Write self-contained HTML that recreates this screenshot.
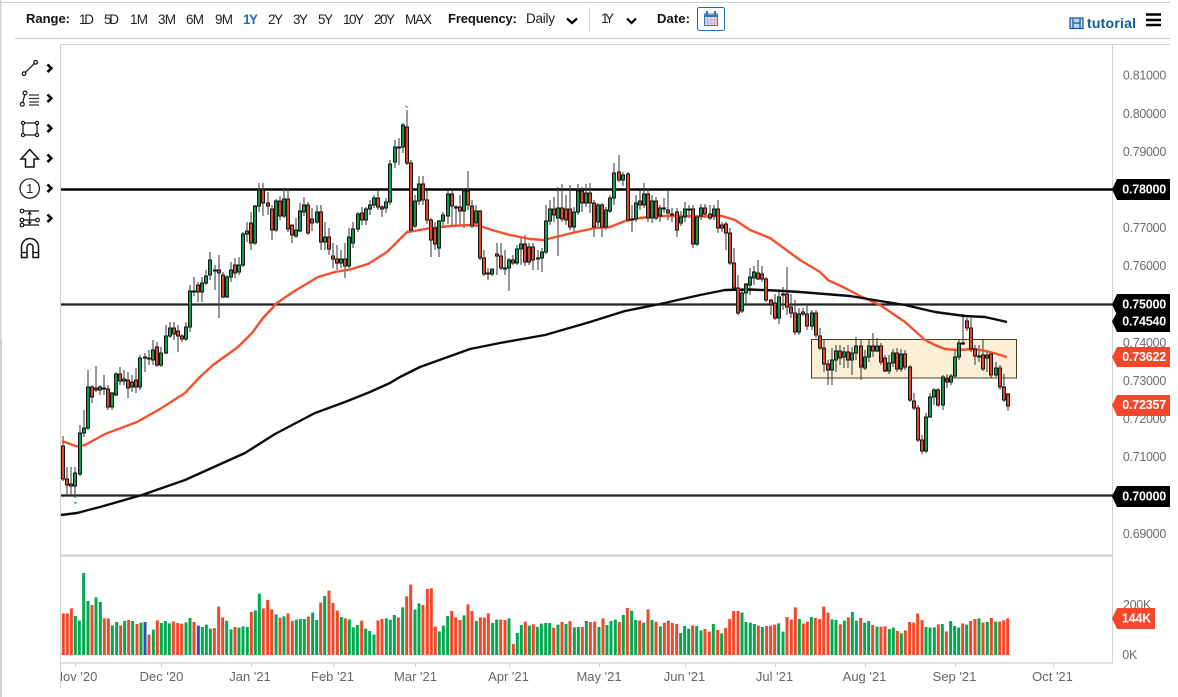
<!DOCTYPE html>
<html><head><meta charset="utf-8"><style>
html,body{margin:0;padding:0;background:#fff;width:1178px;height:697px;overflow:hidden}
svg{display:block;font-family:"Liberation Sans",Arial,sans-serif}
.t{font-size:13.5px;fill:#222}
.b{font-size:13px;font-weight:bold;fill:#111}
.y{font-size:12.5px;letter-spacing:-.3px;fill:#6c6c6c;text-anchor:end}
.l{font-size:13px;fill:#666;text-anchor:middle}
.w{font-size:12.5px;letter-spacing:-.2px;font-weight:bold;fill:#fff;text-anchor:end}
.ic{fill:none;stroke:#111;stroke-width:1.2}
.ch{fill:none;stroke:#000;stroke-width:2.2}
</style></head><body>
<svg width="1178" height="697" viewBox="0 0 1178 697" xmlns="http://www.w3.org/2000/svg">
<defs><clipPath id="c"><rect x="61" y="660" width="1052" height="30"/></clipPath></defs>
<rect x="0" y="0" width="1.5" height="340" fill="#d4d4d4"/>
<rect x="0" y="340" width="2" height="357" fill="#cfcfcf"/>
<rect x="0" y="2" width="1170" height="1" fill="#cfcfcf"/>
<rect x="15" y="38" width="1155" height="1" fill="#cfcfcf"/>
<rect x="60" y="44" width="1110" height="1" fill="#d2d2d2"/>
<rect x="60" y="44" width="1" height="644" fill="#cfcfcf"/>
<rect x="1112" y="44" width="1" height="619" fill="#d2d2d2"/>
<rect x="61" y="554.5" width="1051" height="2" fill="#cdcdcd"/>
<rect x="61" y="662" width="1052" height="2" fill="#e2e2e2"/>

<!-- toolbar -->
<text class="b" x="26" y="23" textLength="44">Range:</text>
<text class="t" x="79" y="24" textLength="15">1D</text>
<text class="t" x="104" y="24" textLength="15">5D</text>
<text class="t" x="130" y="24" textLength="18">1M</text>
<text class="t" x="158" y="24" textLength="18">3M</text>
<text class="t" x="186" y="24" textLength="18">6M</text>
<text class="t" x="215" y="24" textLength="18">9M</text>
<text class="b" x="243" y="24" textLength="15" style="fill:#2a6db5;font-size:13.5px">1Y</text>
<text class="t" x="268" y="24" textLength="15">2Y</text>
<text class="t" x="293" y="24" textLength="15">3Y</text>
<text class="t" x="318" y="24" textLength="15">5Y</text>
<text class="t" x="343" y="24" textLength="21">10Y</text>
<text class="t" x="374" y="24" textLength="21">20Y</text>
<text class="t" x="405" y="24" textLength="27">MAX</text>
<text class="b" x="448" y="23" textLength="69">Frequency:</text>
<text class="t" x="526" y="23" textLength="29">Daily</text>
<path class="ch" d="M567 18.500l5 4.500 5-4.500"/>
<rect x="589" y="7" width="1" height="25" fill="#d0d0d0"/>
<text class="t" x="601" y="23" textLength="13">1Y</text>
<path class="ch" d="M627 18.500l4.500 4.500 4.500-4.500"/>
<text class="b" x="657" y="23" textLength="33">Date:</text>
<rect x="697.500" y="7.500" width="27" height="23" rx="2" fill="#fff" stroke="#1a6bb0"/>
<rect x="704.500" y="14" width="13" height="11.500" fill="#cfe0f2" stroke="#2f77b8"/>
<path d="M704.500 15h13v2h-13z" fill="#2f77b8"/>
<path d="M707.500 17v8M711 17v8M714.500 17v8M705 20h12M705 23h12" stroke="#d88" stroke-width=".6"/>
<path d="M707 11v4M715 11v4" stroke="#2f77b8" stroke-width="2"/>

<rect x="1070" y="18" width="13" height="10.500" fill="#bcd6ee" stroke="#0b5a9c" stroke-width="1.200"/>
<path d="M1073 18v10.500M1080 18v10.500M1073 23h7" stroke="#0b5a9c" stroke-width="1.200"/>
<text x="1087" y="28" font-size="14" font-weight="bold" fill="#0b5a9c" textLength="49">tutorial</text>
<path d="M1146 14.500h15M1146 20h15M1146 25h15" stroke="#000" stroke-width="2.500"/>

<!-- left tools -->
<g class="ic">
<circle cx="24" cy="73.700" r="1.800"/><circle cx="35.700" cy="62.300" r="1.800"/><path d="M25.300 72.400L34.400 63.600"/>
<circle cx="22.300" cy="104.300" r="1.900"/><circle cx="25" cy="93" r="1.900"/><path d="M22.800 102.500L24.600 95"/>
<path d="M29 95h10M29 98.500h10M29 102h10M29 105h10" stroke="#333"/>
<rect x="23" y="123" width="14" height="12"/>
<g fill="#fff"><circle cx="23" cy="123" r="1.600" fill="#fff"/><circle cx="37" cy="123" r="1.600" fill="#fff"/><circle cx="23" cy="135" r="1.600" fill="#fff"/><circle cx="37" cy="135" r="1.600" fill="#fff"/></g>
<path stroke-width="1.500" d="M29.700 149.500L21 159H25.500V167H34V159H38.500Z"/>
<circle cx="29.700" cy="188.500" r="9.700"/>
<path d="M22 211h17M22 220h17M22 225h17"/>
<path d="M29.700 212v12M28 214.500l1.700-2.500 1.700 2.500M28 221.500l1.700 2.500 1.700-2.500" stroke-width="1"/>
<circle cx="22" cy="211" r="1.800" fill="#fff"/><circle cx="22" cy="220" r="1.800" fill="#fff"/><circle cx="22" cy="225" r="1.800" fill="#fff"/><circle cx="37.500" cy="220" r="1.800" fill="#fff"/>
<path stroke-width="1.500" d="M21.500 257.500V247a8.500 8.500 0 0 1 17 0V257.500H33V247a3 3 0 0 0-6 0V257.500Z"/>
<path stroke-width="1.300" d="M21.500 252.500H27M33 252.500H38.500"/>
</g>
<text x="29.700" y="193" font-size="13" fill="#222" text-anchor="middle">1</text>
<path class="ch" style="stroke-width:2.600" d="M47.500 64.500l3.800 3.800-3.800 3.800M47.500 94.500l3.800 3.800-3.800 3.800M47.500 124.500l3.800 3.800-3.800 3.800M47.500 154.500l3.800 3.800-3.800 3.800M47.500 184.500l3.800 3.800-3.800 3.800M47.500 214.500l3.800 3.800-3.800 3.800"/>

<!-- box -->
<rect x="811.500" y="339.500" width="205" height="38.500" fill="#fdefd6" stroke="#4a3d28" stroke-width="1"/>

<!-- horizontal levels -->
<path d="M61 189.500H1113" stroke="#000" stroke-width="2.400"/>
<path d="M61 304.500H1113" stroke="#222" stroke-width="2.200"/>
<path d="M61 495.500H1113" stroke="#222" stroke-width="2.200"/>

<!-- wicks -->
<path fill="none" stroke="#444" stroke-width="1.100" d="M63 436V481M67 467V495M71 467V495M75 467V498M80 425V476M84 410V437M88 370V430M92 385V403M96 366V392M100 385V395M104 375V395M108 385V410M112 392V410M116 372V396M120 367V385M124 370V385M128 372V398M132 375V392M136 368V393M140 355V390M145 353V372M149 350V365M153 340V365M157 342V367M161 347V367M166 325V354M170 322V338M174 322V340M178 325V352M182 334V342M186 322V341M190 285V332M194 277V296M198 282V302M202 277V302M206 270V285M210 252V280M215 265V290M219 255V318M223 272V298M227 275V298M231 262V282M235 258V278M239 257V275M243 232V267M247 222V242M251 212V250M255 205V245M259 183V212M263 183V216M268 192V215M272 205V240M276 199V232M280 196V220M284 188V218M288 189V232M292 225V243M296 218V238M300 203V232M304 197V216M308 202V235M312 208V231M317 205V224M321 205V250M325 222V250M329 228V255M333 243V268M337 245V270M341 250V268M345 243V278M349 228V268M353 222V248M358 212V232M362 207V225M366 207V225M370 200V215M374 195V208M378 191V210M382 205V217M386 198V213M390 160V205M395 140V168M399 138V165M403 123V153M407 110V165M411 160V232M415 195V228M419 176V205M423 176V205M427 190V224M431 218V257M435 222V250M439 220V257M443 212V226M448 190V224M452 190V225M456 205V225M460 195V225M464 189V228M468 171V210M472 200V228M476 205V226M480 210V260M484 250V276M488 268V280M492 269V276M497 243V275M501 243V270M505 250V275M509 258V291M513 255V265M517 245V265M521 237V265M525 235V266M529 243V265M533 243V270M538 250V270M542 248V272M546 205V254M550 200V225M554 197V222M558 187V256M562 184V222M566 195V225M570 185V230M574 207V232M578 184V215M582 187V212M586 184V207M590 183V213M594 200V237M598 203V228M602 203V237M606 207V230M610 195V213M614 163V205M619 155V182M623 172V186M628 172V222M632 205V232M636 195V222M640 190V210M644 183V208M648 188V222M652 195V223M656 197V220M660 205V222M664 198V213M668 191V220M672 208V222M677 208V237M681 211V226M685 202V222M689 205V218M693 205V248M697 215V246M701 204V220M705 204V218M710 205V220M714 205V220M718 200V233M722 222V232M726 222V250M730 228V265M734 248V290M738 275V315M742 290V313M746 283V305M750 268V295M754 266V285M758 260V280M762 266V282M766 277V302M771 299V315M775 294V320M779 290V324M783 287V310M787 267V315M791 294V318M795 300V335M799 308V335M803 308V316M807 304V330M812 310V330M816 310V338M820 328V350M824 340V372M828 360V385M832 348V385M836 345V372M840 345V365M844 347V368M848 345V368M852 347V375M856 337V360M861 340V380M865 350V370M869 340V362M873 333V357M877 338V352M881 343V365M885 355V372M889 355V374M893 349V367M897 348V372M901 349V372M905 350V370M910 365V402M914 393V410M918 405V442M922 435V454M926 413V453M930 393V418M934 388V405M938 388V407M943 375V410M947 374V388M951 374V385M955 350V378M959 340V360M963 314V345M967 318V331M971 318V352M975 345V365M979 345V362M983 340V371M987 350V372M991 352V378M996 362V377M1000 365V390M1004 374V402M1008 393V411"/>

<!-- MA lines -->
<path fill="none" stroke="#f4502f" stroke-width="2.400" stroke-linejoin="round" d="M62 441L70 444 77 446.500 85 445 105 434 137 422 160 409 185 393 200 377 213 365 238 347 252 333 263 318 277 303 293 292 318 277 335 272 350 269.500 368 264 387 252 400 239 407 232 414 231 425 229 450 226 470 225 480 226 492 230 510 235 530 239 543 240 560 236 572 233 595 228 610 227 625 221 640 218 660 216 680 216 700 216.500 722 216 735 220 750 230 770 238 785 249 800 260 820 272 828 280 845 288 860 296 880 305 905 322 915 331 925 340 935 345 945 349 957 350 975 349 990 352 1007 357"/>
<path fill="none" stroke="#0c0c0c" stroke-width="2.400" stroke-linejoin="round" d="M61 515L77 513 100 507 142 495 185 480 225 462 245 453 275 434 315 413 345 402 370 392 390 383 400 377 420 367 445 358 470 349 500 343 545 335 590 322 625 311 660 304 700 295 725 290 750 289.500 775 290.500 800 292 825 294 850 296 880 301 905 305 935 312 965 316 985 317 1007 322"/>

<!-- candles -->
<g transform="translate(-1.5,0)" stroke="#151515" stroke-width="1">
<path fill="#e5432a" d="M63 446h3V479h-3zM67 479h3V485h-3zM71 484h3V486h-3zM92 387h3V397h-3zM96 388h3V390h-3zM104 388h3V389h-3zM108 389h3V407h-3zM120 374h3V381h-3zM128 380h3V388h-3zM136 380h3V387h-3zM145 357h3V358h-3zM149 358h3V359h-3zM157 347h3V365h-3zM174 328h3V334h-3zM178 331h3V336h-3zM182 336h3V339h-3zM194 291h3V292h-3zM198 285h3V292h-3zM215 270h3V271h-3zM219 270h3V273h-3zM223 275h3V297h-3zM235 265h3V273h-3zM251 223h3V243h-3zM263 190h3V203h-3zM268 203h3V206h-3zM272 209h3V230h-3zM280 201h3V216h-3zM288 199h3V229h-3zM292 225h3V235h-3zM308 205h3V233h-3zM312 219h3V223h-3zM321 212h3V242h-3zM329 237h3V249h-3zM333 256h3V259h-3zM337 259h3V263h-3zM345 259h3V266h-3zM362 213h3V220h-3zM378 198h3V207h-3zM382 207h3V209h-3zM399 147h3V148h-3zM407 127h3V163h-3zM411 163h3V230h-3zM423 184h3V200h-3zM427 200h3V220h-3zM431 220h3V240h-3zM435 228h3V244h-3zM452 194h3V206h-3zM456 207h3V208h-3zM460 207h3V211h-3zM468 191h3V205h-3zM472 206h3V226h-3zM480 211h3V258h-3zM484 258h3V274h-3zM488 273h3V274h-3zM497 254h3V256h-3zM501 256h3V268h-3zM505 268h3V269h-3zM513 260h3V263h-3zM525 244h3V262h-3zM529 247h3V262h-3zM533 247h3V260h-3zM538 258h3V259h-3zM554 209h3V215h-3zM562 208h3V219h-3zM566 209h3V220h-3zM570 209h3V227h-3zM582 191h3V203h-3zM590 193h3V203h-3zM594 203h3V227h-3zM602 205h3V227h-3zM619 172h3V180h-3zM628 174h3V220h-3zM632 219h3V220h-3zM640 201h3V205h-3zM648 194h3V218h-3zM656 201h3V218h-3zM664 208h3V209h-3zM668 210h3V213h-3zM672 214h3V215h-3zM677 212h3V230h-3zM689 209h3V210h-3zM693 209h3V244h-3zM705 208h3V214h-3zM710 214h3V218h-3zM718 209h3V228h-3zM722 225h3V228h-3zM726 224h3V233h-3zM730 233h3V263h-3zM734 263h3V288h-3zM738 288h3V313h-3zM758 273h3V279h-3zM762 274h3V279h-3zM766 279h3V300h-3zM771 300h3V305h-3zM775 303h3V318h-3zM783 294h3V295h-3zM787 294h3V307h-3zM791 307h3V313h-3zM795 313h3V332h-3zM803 312h3V314h-3zM807 314h3V326h-3zM816 313h3V335h-3zM820 336h3V348h-3zM824 348h3V364h-3zM828 364h3V370h-3zM840 351h3V358h-3zM848 352h3V360h-3zM861 346h3V367h-3zM873 346h3V351h-3zM881 346h3V362h-3zM885 358h3V371h-3zM897 353h3V369h-3zM905 354h3V367h-3zM910 367h3V400h-3zM914 401h3V408h-3zM918 408h3V440h-3zM922 440h3V451h-3zM938 390h3V405h-3zM947 379h3V382h-3zM963 343h3V344h-3zM967 321h3V328h-3zM971 328h3V349h-3zM975 349h3V356h-3zM979 356h3V357h-3zM983 355h3V369h-3zM991 354h3V375h-3zM1000 368h3V387h-3zM1004 387h3V400h-3zM1008 394h3V406h-3z"/>
<path fill="#0a9a48" d="M75 473h3V486h-3zM80 433h3V474h-3zM84 428h3V433h-3zM88 387h3V428h-3zM100 387h3V390h-3zM112 393h3V407h-3zM116 374h3V395h-3zM124 379h3V381h-3zM132 382h3V387h-3zM140 358h3V387h-3zM153 350h3V360h-3zM161 353h3V365h-3zM166 336h3V353h-3zM170 328h3V336h-3zM186 327h3V339h-3zM190 291h3V327h-3zM202 283h3V292h-3zM206 276h3V283h-3zM210 260h3V275h-3zM227 277h3V297h-3zM231 270h3V277h-3zM239 265h3V272h-3zM243 234h3V265h-3zM247 231h3V234h-3zM255 206h3V243h-3zM259 190h3V206h-3zM276 201h3V230h-3zM284 199h3V216h-3zM296 230h3V236h-3zM300 211h3V231h-3zM304 205h3V212h-3zM317 212h3V222h-3zM325 237h3V242h-3zM341 259h3V263h-3zM349 237h3V266h-3zM353 229h3V243h-3zM358 214h3V229h-3zM366 209h3V220h-3zM370 205h3V209h-3zM374 198h3V205h-3zM386 202h3V208h-3zM390 164h3V202h-3zM395 147h3V162h-3zM403 125h3V147h-3zM415 201h3V226h-3zM419 184h3V201h-3zM439 221h3V248h-3zM443 215h3V221h-3zM448 194h3V216h-3zM464 191h3V211h-3zM476 211h3V223h-3zM492 269h3V274h-3zM509 260h3V268h-3zM517 249h3V263h-3zM521 244h3V249h-3zM542 252h3V258h-3zM546 221h3V252h-3zM550 209h3V221h-3zM558 208h3V218h-3zM574 212h3V227h-3zM578 191h3V212h-3zM586 193h3V203h-3zM598 205h3V222h-3zM606 210h3V227h-3zM610 198h3V211h-3zM614 173h3V198h-3zM623 175h3V180h-3zM636 203h3V219h-3zM644 194h3V205h-3zM652 201h3V218h-3zM660 208h3V216h-3zM681 217h3V223h-3zM685 209h3V217h-3zM697 217h3V244h-3zM701 208h3V216h-3zM714 209h3V216h-3zM742 293h3V311h-3zM746 284h3V293h-3zM750 277h3V285h-3zM754 272h3V278h-3zM779 297h3V318h-3zM799 314h3V332h-3zM812 313h3V326h-3zM832 360h3V370h-3zM836 351h3V360h-3zM844 352h3V357h-3zM852 353h3V360h-3zM856 346h3V353h-3zM865 357h3V368h-3zM869 346h3V357h-3zM877 346h3V351h-3zM889 363h3V371h-3zM893 353h3V363h-3zM901 354h3V369h-3zM926 417h3V451h-3zM930 397h3V417h-3zM934 390h3V397h-3zM943 377h3V405h-3zM951 376h3V382h-3zM955 357h3V376h-3zM959 343h3V357h-3zM987 355h3V358h-3zM996 368h3V375h-3z"/>
</g>
<path d="M405 106l3 1.500" stroke="#f4502f" stroke-width="1" fill="none"/>
<path d="M74 502l1.500 1.500 1.500-1.500" stroke="#22c46a" stroke-width="1.200" fill="none"/>

<!-- volume bars -->
<g fill="none" stroke-width="9">
<g transform="translate(0,550) scale(.33333)">
<path stroke="#f4472a" d="M190 190V315M202 190V315M214 175V315M276 165V315M313 205V315M325 205V315M362 226V315M386 210V315M411 222V315M447 254V315M472 211V315M520 214V315M533 219V315M545 221V315M582 216V315M643 234V315M656 170V315M668 202V315M705 231V315M754 186V315M790 175V315M803 150V315M815 178V315M840 203V315M864 190V315M877 213V315M925 200V315M962 158V315M987 122V315M999 159V315M1012 182V315M1036 205V315M1085 212V315M1134 211V315M1146 207V315M1195 202V315"/>
<path stroke="#00a94f" d="M226 198V315M238 212V315M251 69V315M264 153V315M288 142V315M301 156V315M337 226V315M350 216V315M374 213V315M398 213V315M423 218V315M460 239V315M484 219V315M496 213V315M508 220V315M558 217V315M570 204V315M607 231V315M619 224V315M631 236V315M680 212V315M693 238V315M717 233V315M729 229V315M742 231V315M766 181V315M778 131V315M828 193V315M852 199V315M889 209V315M901 207V315M913 207V315M938 188V315M950 210V315M974 138V315M1024 201V315M1048 208V315M1060 232V315M1072 225V315M1097 236V315M1109 243V315M1122 254V315M1159 205V315M1171 209V315M1183 195V315"/>
<path stroke="#2a4fb8" d="M435 216V315M595 227V315"/>
</g>
<g transform="translate(400,550) scale(.33333)">
<path stroke="#f4472a" d="M20 139V315M32 104V315M69 165V315M82 117V315M94 115V315M106 230V315M155 183V315M167 202V315M180 210V315M204 163V315M216 183V315M241 202V315M253 203V315M265 190V315M302 209V315M315 210V315M340 282V315M376 215V315M400 223V315M461 233V315M486 216V315M510 213V315M547 231V315M571 216V315M584 215V315M609 205V315M658 216V315M682 174V315M719 212V315M744 178V315M768 215V315M793 218V315M805 212V315M817 219V315M830 222V315M878 226V315M915 237V315M928 245V315M953 240V315M977 234V315M989 207V315M1001 183V315M1014 183V315M1075 227V315M1100 228V315M1112 227V315M1124 224V315M1161 201V315M1174 209V315M1186 172V315"/>
<path stroke="#00a94f" d="M8 172V315M45 178V315M57 160V315M118 244V315M130 227V315M143 198V315M192 196V315M229 213V315M278 219V315M290 209V315M327 205V315M352 249V315M364 225V315M388 227V315M412 231V315M424 221V315M437 219V315M449 219V315M474 224V315M498 222V315M523 232V315M535 231V315M559 213V315M597 231V315M621 225V315M633 213V315M646 209V315M670 195V315M695 182V315M707 210V315M731 218V315M756 210V315M781 229V315M842 249V315M854 228V315M866 236V315M890 228V315M903 241V315M940 222V315M965 250V315M1026 188V315M1038 216V315M1051 218V315M1063 222V315M1087 231V315M1136 220V315M1149 245V315M1198 207V315"/>
</g>
<g transform="translate(800,550) scale(.33333)">
<path stroke="#f4472a" d="M10 221V315M22 215V315M46 204V315M59 207V315M71 170V315M84 188V315M121 223V315M145 202V315M182 204V315M218 225V315M243 230V315M255 229V315M292 243V315M316 241V315M329 216V315M341 218V315M353 191V315M366 210V315M415 223V315M439 244V315M488 220V315M512 213V315M525 207V315M549 218V315M574 204V315M599 215V315M611 211V315M623 205V315"/>
<path stroke="#00a94f" d="M34 201V315M96 208V315M108 210V315M133 212V315M157 186V315M169 212V315M194 218V315M206 213V315M231 230V315M268 237V315M280 233V315M304 250V315M378 231V315M390 233V315M403 232V315M427 222V315M452 213V315M464 228V315M476 233V315M500 224V315M537 205V315M562 216V315M587 215V315"/>
</g>
</g>

<!-- x axis -->
<path stroke="#cfcfcf" stroke-width="1" d="M75.500 663v4M161.500 663v4M251.500 663v4M333.500 663v4M415.500 663v4M509.500 663v4M599.500 663v4M685.500 663v4M775.500 663v4M865.500 663v4M955.500 663v4M1053.500 663v4"/>
<g clip-path="url(#c)">
<text class="l" x="75.500" y="681">Nov '20</text>
<text class="l" x="161.500" y="681">Dec '20</text>
<text class="l" x="250" y="681">Jan '21</text>
<text class="l" x="332.500" y="681">Feb '21</text>
<text class="l" x="415.500" y="681">Mar '21</text>
<text class="l" x="508.500" y="681">Apr '21</text>
<text class="l" x="599" y="681">May '21</text>
<text class="l" x="684.500" y="681">Jun '21</text>
<text class="l" x="774.500" y="681">Jul '21</text>
<text class="l" x="864.500" y="681">Aug '21</text>
<text class="l" x="954.500" y="681">Sep '21</text>
<text class="l" x="1052.500" y="681">Oct '21</text>
</g>

<!-- y axis -->
<g>
<text class="y" x="1166" y="79.500">0.81000</text>
<text class="y" x="1166" y="118">0.80000</text>
<text class="y" x="1166" y="156">0.79000</text>
<text class="y" x="1166" y="232">0.77000</text>
<text class="y" x="1166" y="270">0.76000</text>
<text class="y" x="1166" y="347">0.74000</text>
<text class="y" x="1166" y="385">0.73000</text>
<text class="y" x="1166" y="423">0.72000</text>
<text class="y" x="1166" y="461">0.71000</text>
<text class="y" x="1166" y="538">0.69000</text>
<text class="y" x="1151" y="609">200K</text>
<text class="y" x="1137" y="659">0K</text>
</g>

<!-- tags -->
<path fill="#000" d="M1112 189.500l5-10.500H1170V200H1117z"/><text class="w" x="1166" y="193.500">0.78000</text>
<path fill="#000" d="M1112 304.500l5-10.500H1170V315H1117z"/><text class="w" x="1166" y="308.500">0.75000</text>
<path fill="#000" d="M1112 321.500l5-9.500H1170V332H1117z"/><text class="w" x="1166" y="325.500">0.74540</text>
<path fill="#f4472a" d="M1112 357l5-10H1170V367H1117z"/><text class="w" x="1166" y="361">0.73622</text>
<path fill="#f4472a" d="M1112 405l5-10H1170V416H1117z"/><text class="w" x="1166" y="409">0.72357</text>
<path fill="#000" d="M1112 496.500l5-10.500H1170V507H1117z"/><text class="w" x="1166" y="500.500">0.70000</text>
<path fill="#f4472a" d="M1112 618.500l5-10.500H1155V629H1117z"/><text class="w" x="1151" y="622.500">144K</text>
</svg>
</body></html>
